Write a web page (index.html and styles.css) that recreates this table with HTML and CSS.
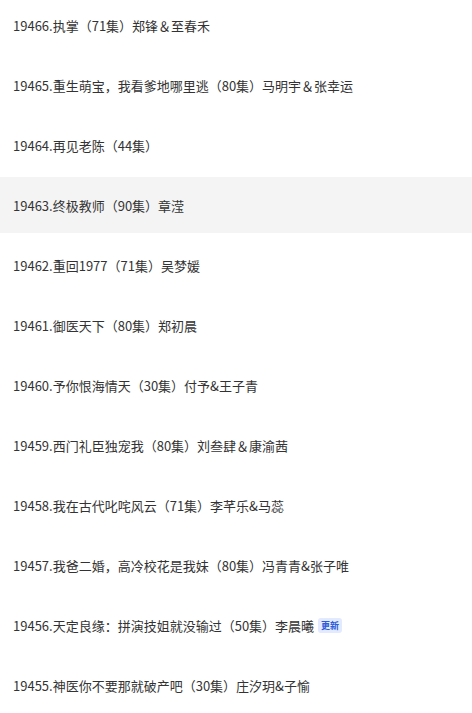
FILE: index.html
```html
<!DOCTYPE html>
<html lang="zh">
<head>
<meta charset="utf-8">
<link rel="stylesheet" href="styles.css">
</head>
<body>
<ul class="list">
  <li class="item">19466.执掌（71集）郑锋＆至春禾</li>
  <li class="item">19465.重生萌宝，我看爹地哪里逃（80集）马明宇＆张幸运</li>
  <li class="item">19464.再见老陈（44集）</li>
  <li class="item active">19463.终极教师（90集）章滢</li>
  <li class="item">19462.重回1977（71集）吴梦媛</li>
  <li class="item">19461.御医天下（80集）郑初晨</li>
  <li class="item">19460.予你恨海情天（30集）付予&amp;王子青</li>
  <li class="item">19459.西门礼臣独宠我（80集）刘叁肆＆康渝茜</li>
  <li class="item">19458.我在古代叱咤风云（71集）李芊乐&amp;马蕊</li>
  <li class="item">19457.我爸二婚，高冷校花是我妹（80集）冯青青&amp;张子唯</li>
  <li class="item">19456.天定良缘：拼演技姐就没输过（50集）李晨曦<span class="badge">更新</span></li>
  <li class="item">19455.神医你不要那就破产吧（30集）庄汐玥&amp;子愉</li>
</ul>
</body>
</html>
```
FILE: styles.css
```css
html, body {
  margin: 0;
  padding: 0;
  background: #fff;
}
body {
  font-family: "Noto Sans CJK SC", "Noto Sans", sans-serif;
  font-size: 13px;
  color: #333;
  overflow: hidden;
}
.list {
  list-style: none;
  margin: -3px 0 0 0;
  padding: 0;
  display: flex;
  flex-direction: column;
  gap: 4px;
}
.item {
  height: 56px;
  display: flex;
  align-items: center;
  padding-left: 13px;
  white-space: nowrap;
}
.item.active {
  background: #f4f4f4;
}
.badge {
  display: inline-flex;
  align-items: center;
  justify-content: center;
  margin-left: 4px;
  width: 24px;
  height: 15px;
  border-radius: 3px;
  background: #e3eaff;
  color: #2b5bd8;
  font-size: 9px;
  font-weight: 700;
  line-height: 1;
}
```
